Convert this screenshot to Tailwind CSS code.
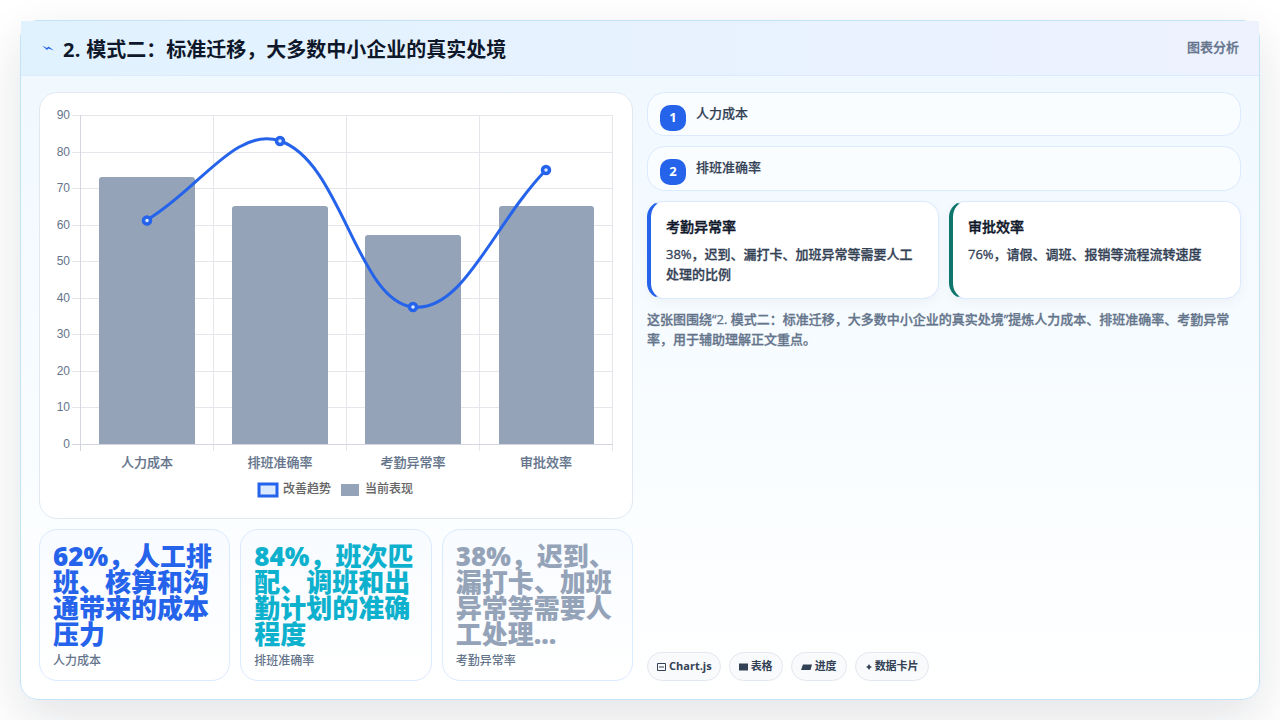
<!DOCTYPE html>
<html lang="zh">
  <head>
    <meta charset="UTF-8" />
    <script src="https://cdn.jsdelivr.net/npm/@tailwindcss/browser@4"></script>
  </head>
  <body class="bg-white w-[1280px] h-[720px] overflow-hidden font-['Open_Sans','Noto_Sans_CJK_SC',sans-serif]">
    <div class="p-5 w-[1280px] h-[720px]">
      <div class="w-[1240px] h-[680px] flex flex-col rounded-[18px] border border-[#c3e4f7] bg-gradient-to-b from-[#eff8ff] to-white shadow-[0_18px_50px_rgba(15,23,42,0.12)]">
        <!-- header -->
        <div class="h-[55px] shrink-0 flex items-center justify-between pl-[20px] pr-[20px] border-b border-[#dbeafe] bg-gradient-to-r from-[#e0f2fe] to-[#eef2ff]">
          <div class="flex items-center gap-[8px]">
            <svg class="w-[14px] h-[10px]" viewBox="0 0 14 10"><path d="M1 2.500L6 5L7.500 3.500L13 7.500L7.500 5.500L6 7L1 2.500Z" fill="#2563eb" /></svg>
            <h1 class="text-[20px] leading-[28px] font-bold text-[#0f172a] pt-[4px]"><span class="tracking-[0.3px]">2. </span>模式二：标准迁移，大多数中小企业的真实处境</h1>
          </div>
          <span class="text-[13px] font-medium [-webkit-text-stroke:0.3px] text-[#64748b]">图表分析</span>
        </div>

        <!-- body -->
        <div class="flex-1 min-h-0 grid grid-cols-2 gap-[14px] px-[18px] pt-[16px] pb-[18px]">
          <!-- left -->
          <div class="flex flex-col gap-[10px] min-h-0">
            <div class="h-[427px] shrink-0 bg-white rounded-[18px] border border-[#e2e8f0]">
              <svg width="592" height="425" viewBox="40 93 592 425" class="block">
                <g stroke="#e4e6ec" stroke-width="1">
                  <path d="M72 115.500H613M72 152.500H613M72 188.500H613M72 225.500H613M72 261.500H613M72 298.500H613M72 334.500H613M72 371.500H613M72 407.500H613" />
                  <path d="M213.500 115V451M346.500 115V451M479.500 115V451M612.500 115V451" />
                </g>
                <path d="M72 444.500H613M80.500 115V451" stroke="#d3d6de" stroke-width="1" fill="none" />
                <g fill="#94a3b8">
                  <path d="M99 444V180a3 3 0 0 1 3-3h90a3 3 0 0 1 3 3V444Z" />
                  <path d="M232 444V209a3 3 0 0 1 3-3h90a3 3 0 0 1 3 3V444Z" />
                  <path d="M365 444V238a3 3 0 0 1 3-3h90a3 3 0 0 1 3 3V444Z" />
                  <path d="M499 444V209a3 3 0 0 1 3-3h89a3 3 0 0 1 3 3V444Z" />
                </g>
                <path d="M147 220C200.200 188.400 235.200 126.350 280 141C341.600 161.150 356.900 300.900 413 307C463.300 312.500 492.800 224.800 546 170" fill="none" stroke="#2563eb" stroke-width="3" />
                <g fill="#dbeafe" stroke="#2563eb" stroke-width="3.500">
                  <circle cx="147" cy="220.500" r="3.500" />
                  <circle cx="280" cy="141" r="3.500" />
                  <circle cx="413" cy="307" r="3.500" />
                  <circle cx="546" cy="170" r="3.500" />
                </g>
                <g fill="#64748b" font-size="12" text-anchor="end" font-family="Liberation Sans, sans-serif">
                  <text x="70" y="119">90</text>
                  <text x="70" y="156">80</text>
                  <text x="70" y="192">70</text>
                  <text x="70" y="229">60</text>
                  <text x="70" y="265">50</text>
                  <text x="70" y="302">40</text>
                  <text x="70" y="338">30</text>
                  <text x="70" y="375">20</text>
                  <text x="70" y="411">10</text>
                  <text x="70" y="448">0</text>
                </g>
                <g fill="#64748b" stroke="#64748b" stroke-width="0.150" font-size="13" font-weight="500" text-anchor="middle" font-family="Noto Sans CJK SC, sans-serif">
                  <text x="147" y="467">人力成本</text>
                  <text x="280" y="467">排班准确率</text>
                  <text x="413" y="467">考勤异常率</text>
                  <text x="546" y="467">审批效率</text>
                </g>
                <rect x="259" y="484" width="18" height="12" fill="#dbeafe" stroke="#2563eb" stroke-width="3" />
                <rect x="341" y="484" width="18" height="12" fill="#94a3b8" />
                <g fill="#666666" stroke="#666666" stroke-width="0.100" font-size="12" font-weight="500" font-family="Noto Sans CJK SC, sans-serif">
                  <text x="283" y="493">改善趋势</text>
                  <text x="365" y="493">当前表现</text>
                </g>
              </svg>
            </div>
            <div class="flex-1 min-h-0 grid grid-cols-3 gap-[10px]">
              <div class="rounded-[18px] border border-[#dbeafe] bg-gradient-to-b from-[#f8fbff] to-white px-[13px] pt-[13px]">
                <div class="text-[26px] leading-[26px] font-extrabold text-[#2563eb]">62%，人工排班、核算和沟通带来的成本压力</div>
                <div class="mt-[5px] text-[12px] font-medium text-[#64748b]">人力成本</div>
              </div>
              <div class="rounded-[18px] border border-[#dbeafe] bg-gradient-to-b from-[#f8fbff] to-white px-[13px] pt-[13px]">
                <div class="text-[26px] leading-[26px] font-extrabold text-[#0eb1cd]">84%，班次匹配、调班和出勤计划的准确程度</div>
                <div class="mt-[5px] text-[12px] font-medium text-[#64748b]">排班准确率</div>
              </div>
              <div class="rounded-[18px] border border-[#dbeafe] bg-gradient-to-b from-[#f8fbff] to-white px-[13px] pt-[13px]">
                <div class="text-[26px] leading-[26px] font-extrabold text-[#94a3b8]">38%，迟到、漏打卡、加班异常等需要人工处理...</div>
                <div class="mt-[5px] text-[12px] font-medium text-[#64748b]">考勤异常率</div>
              </div>
            </div>
          </div>

          <!-- right -->
          <div class="flex flex-col min-h-0">
            <div class="flex items-start gap-[10px] h-[44px] rounded-[18px] border border-[#dbeafe] bg-white/60 pl-[12px] pt-[12px]">
              <span class="w-[26px] h-[26px] shrink-0 rounded-[10px] bg-[#2563eb] text-white text-[13px] font-bold flex items-center justify-center">1</span>
              <span class="-mt-[1px] text-[13px] leading-[18px] font-medium [-webkit-text-stroke:0.2px] text-[#334155]">人力成本</span>
            </div>
            <div class="mt-[10px] flex items-start gap-[10px] h-[45px] rounded-[18px] border border-[#dbeafe] bg-white/60 pl-[12px] pt-[12px]">
              <span class="w-[26px] h-[26px] shrink-0 rounded-[10px] bg-[#2563eb] text-white text-[13px] font-bold flex items-center justify-center">2</span>
              <span class="-mt-[1px] text-[13px] leading-[18px] font-medium [-webkit-text-stroke:0.2px] text-[#334155]">排班准确率</span>
            </div>
            <div class="mt-[10px] grid grid-cols-2 gap-[10px]">
              <div class="h-[98px] rounded-[16px] border border-[#dbeafe] border-l-4 border-l-[#2563eb] bg-white pl-[15px] pr-[16px] pt-[15px] shadow-[0_4px_12px_rgba(15,23,42,0.04)]">
                <div class="text-[14px] leading-[20px] font-medium [-webkit-text-stroke:0.4px] text-[#0f172a]">考勤异常率</div>
                <p class="mt-[8px] text-[13px] leading-[19.5px] font-medium [-webkit-text-stroke:0.3px] text-[#334155]">38%，迟到、漏打卡、加班异常等需要人工处理的比例</p>
              </div>
              <div class="h-[98px] rounded-[16px] border border-[#dbeafe] border-l-4 border-l-[#0f766e] bg-white pl-[15px] pr-[16px] pt-[15px] shadow-[0_4px_12px_rgba(15,23,42,0.04)]">
                <div class="text-[14px] leading-[20px] font-medium [-webkit-text-stroke:0.4px] text-[#0f172a]">审批效率</div>
                <p class="mt-[8px] text-[13px] leading-[19.5px] font-medium [-webkit-text-stroke:0.3px] text-[#334155]">76%，请假、调班、报销等流程流转速度</p>
              </div>
            </div>
            <p class="mt-[10px] text-[13px] leading-[20px] font-medium [-webkit-text-stroke:0.3px] text-[#64748b]">这张图围绕“2. 模式二：标准迁移，大多数中小企业的真实处境”提炼人力成本、排班准确率、考勤异常率，用于辅助理解正文重点。</p>
            <div class="mt-auto flex gap-[8px]">
              <span class="h-[29px] pl-[9px] pr-[8px] rounded-full border border-[#e2e8f0] bg-[#f8fafc] flex items-center gap-[3px] text-[11px] font-bold text-[#334155]">
                <svg class="w-[9px] h-[8px]" viewBox="0 0 9 8"><path d="M.5 .5h8v7h-8zM2 4h5" fill="none" stroke="#334155" /></svg>Chart.js</span>
              <span class="h-[29px] px-[9px] rounded-full border border-[#e2e8f0] bg-[#f8fafc] flex items-center gap-[3px] text-[11px] font-bold text-[#334155]">
                <svg class="w-[9px] h-[8px]" viewBox="0 0 9 8"><rect y=".5" width="9" height="7" fill="#334155" /></svg>表格</span>
              <span class="h-[29px] px-[9px] rounded-full border border-[#e2e8f0] bg-[#f8fafc] flex items-center gap-[3px] text-[11px] font-bold text-[#334155]">
                <svg class="w-[11px] h-[8px]" viewBox="0 0 11 8"><path d="M2 1.500H11L9.500 7H0Z" fill="#334155" /></svg>进度</span>
              <span class="h-[29px] px-[9px] rounded-full border border-[#e2e8f0] bg-[#f8fafc] flex items-center gap-[2px] text-[11px] font-bold text-[#334155]">
                <svg class="w-[8px] h-[8px]" viewBox="0 0 8 8"><path d="M4 1L5.200 3L7 4L5.200 5L4 7L2.800 5L1 4L2.800 3Z" fill="#334155" /></svg>数据卡片</span>
            </div>
          </div>
        </div>
      </div>
    </div>
  </body>
</html>
